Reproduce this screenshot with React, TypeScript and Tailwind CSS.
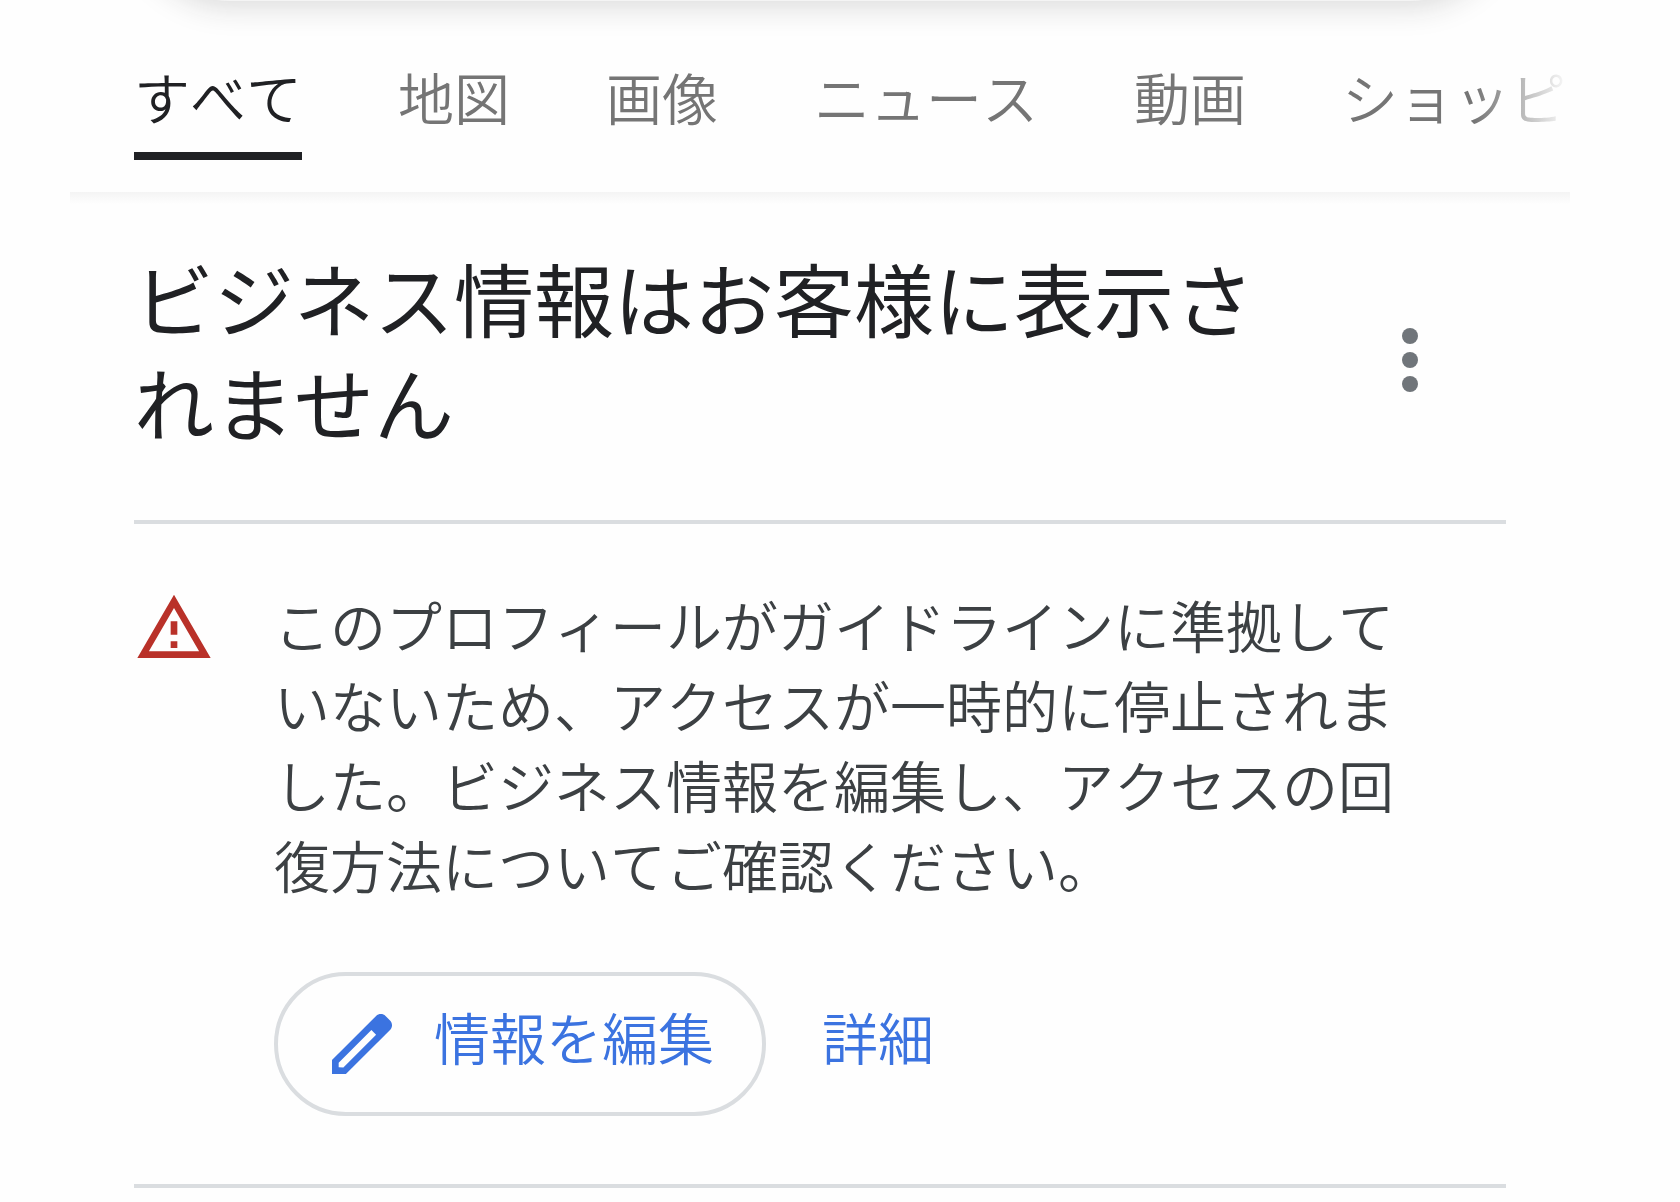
const tabs = [
  { label: 'すべて', active: true },
  { label: '地図' },
  { label: '画像' },
  { label: 'ニュース' },
  { label: '動画' },
  { label: 'ショッピ' },
]

function MoreIcon() {
  return (
    <svg viewBox="0 0 24 24" className="w-24 h-24 fill-[#70757a]" aria-hidden="true">
      <circle cx="12" cy="6" r="2" />
      <circle cx="12" cy="12" r="2" />
      <circle cx="12" cy="18" r="2" />
    </svg>
  )
}

function WarningIcon() {
  return (
    <svg viewBox="0 0 24 24" className="w-20 h-20 shrink-0 fill-[#b93129]" aria-hidden="true">
      <path d="M12 5.99L19.53 19H4.47L12 5.99M12 2L1 21h22L12 2zm1 14h-2v2h2v-2zm0-6h-2v4h2v-4z" />
    </svg>
  )
}

function PencilIcon() {
  return (
    <svg viewBox="0 0 24 24" className="w-20 h-20 shrink-0 fill-[#3b73e0]" aria-hidden="true">
      <path d="M20.41 4.94l-1.35-1.35c-.78-.78-2.05-.78-2.83 0L3 16.82V21h4.18L20.41 7.77c.79-.78.79-2.05 0-2.83zm-14 14.12L5 19v-1.36l9.82-9.82 1.41 1.41-9.82 9.83z" />
    </svg>
  )
}

export default function App() {
  return (
    <div lang="ja" className="min-h-screen bg-[#fefefe] pl-[70px] pr-[110px] overflow-hidden font-['Noto_Sans_CJK_JP',sans-serif] font-[350] [font-kerning:none] text-[56px] leading-[80px] text-[#3c4043]">
      <header className="relative">
        {/* Lower edge of the search box, scrolled out of view */}
        <div className="absolute inset-x-16 -top-[199px] h-[200px] rounded-[96px] bg-[#f4f4f4] shadow-[0_4px_32px_rgba(32,33,36,0.18)]" />

        <nav className="relative overflow-hidden pl-16 pb-8">
          <ul className="flex gap-24 whitespace-nowrap">
            {tabs.map((tab) => (
              <li key={tab.label} className="shrink-0">
                <a
                  href="#"
                  className={
                    tab.active
                      ? 'block pt-14 pb-4 border-b-8 border-[#202124] text-[#202124]'
                      : 'block pt-14 pb-4 border-b-8 border-transparent text-[#757575]'
                  }
                >
                  {tab.label}
                </a>
              </li>
            ))}
          </ul>
          <div className="absolute inset-y-0 right-0 w-24 bg-linear-to-r from-[#fefefe]/0 to-[#fefefe]" />
        </nav>
        <div className="h-3 bg-linear-to-b from-[#f4f4f4] to-[#fefefe]" />
      </header>

      <main className="px-16">
        <div className="flex items-center justify-between gap-12 pt-10 pb-17 pr-12 border-b-4 border-[#dadde0]">
          <h1 className="flex-1 font-normal text-[80px] leading-[104px] text-[#202124]">
            ビジネス情報はお客様に表示されません
          </h1>
          <button type="button" aria-label="メニュー" className="mt-6 shrink-0">
            <MoreIcon />
          </button>
        </div>

        <section className="flex gap-15 pt-15 pb-17 border-b-4 border-[#dadde0]">
          <div className="pt-1">
            <WarningIcon />
          </div>
          <div className="flex-1">
            <p className="pr-24">
              このプロフィールがガイドラインに準拠していないため、アクセスが一時的に停止されました。ビジネス情報を編集し、アクセスの回復方法についてご確認ください。
            </p>
            <div className="flex items-center gap-14 mt-17 text-[#3b73e0]">
              <button type="button" className="flex items-center gap-8 h-36 pl-11 pr-12 rounded-full border-4 border-[#dadde0]">
                <PencilIcon />
                <span className="pb-4">情報を編集</span>
              </button>
              <a href="#" className="pb-4">詳細</a>
            </div>
          </div>
        </section>
      </main>
    </div>
  )
}
